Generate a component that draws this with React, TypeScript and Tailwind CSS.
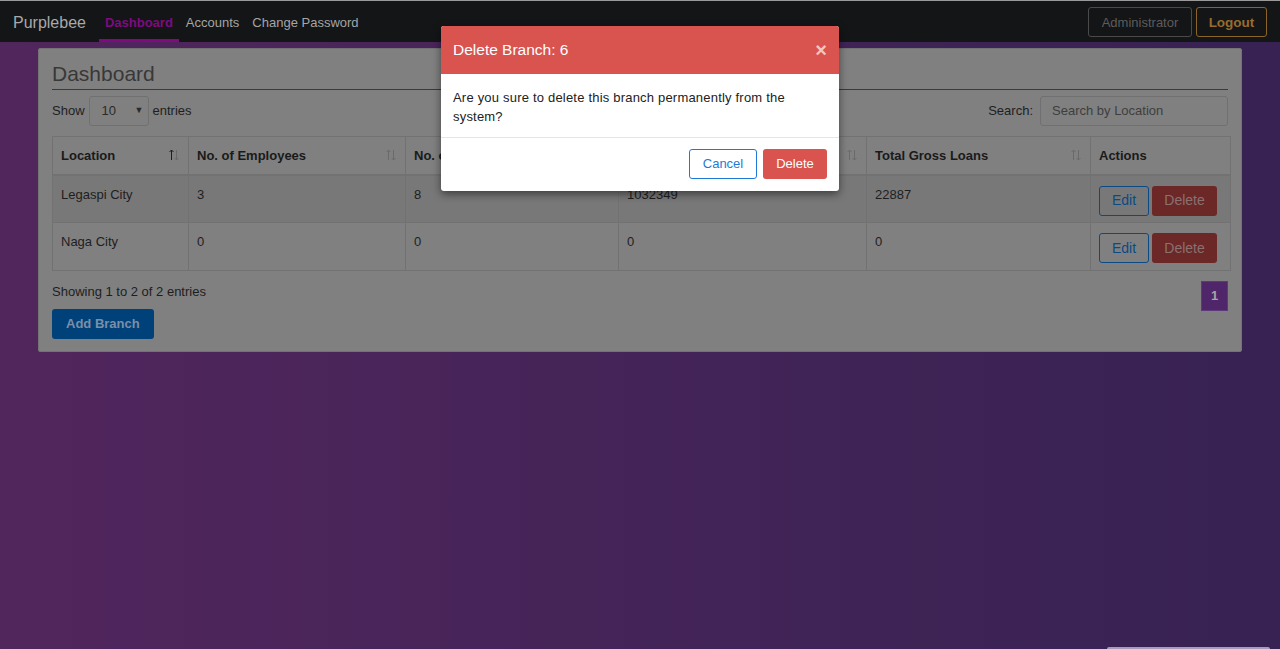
import React from "react";

const SortIcon = ({ active }: { active?: boolean }) => (
  <svg width="12" height="14" viewBox="0 0 12 14" className="shrink-0">
    <g strokeWidth="1" fill="none">
      <g stroke={active ? "#1e1e1e" : "#6a6a6a"}>
        <line x1="3.5" y1="2" x2="3.5" y2="12" />
        <polyline points="1.5,4 3.5,2 5.5,4" />
      </g>
      <g stroke="#6a6a6a">
        <line x1="8.5" y1="2" x2="8.5" y2="12" />
        <polyline points="6.5,10 8.5,12 10.5,10" />
      </g>
    </g>
  </svg>
);

const rows = [
  { loc: "Legaspi City", emp: "3", clients: "8", savings: "1032349", loans: "22887" },
  { loc: "Naga City", emp: "0", clients: "0", savings: "0", loans: "0" },
];

export default function App() {
  return (
    <div
      className="relative w-[1280px] h-[649px] overflow-hidden text-[13px] text-[#1a1a1a] bg-[linear-gradient(to_right,#51265d,#372253)]"
      style={{ fontFamily: '"Liberation Sans", Arial, sans-serif' }}
    >
      {/* Navbar */}
      <div className="h-[42px] bg-[#141517] border-t border-[#9a9a9a] flex items-stretch justify-between px-[13px]">
        <div className="flex items-stretch">
          <div className="flex items-center text-[16px] text-[#a9a9a9] mr-[13px] pt-[3px]">Purplebee</div>
          <div className="flex items-center px-[6px] font-bold text-[#800a80] border-b-[3px] border-[#800a80] pt-[5px]">Dashboard</div>
          <div className="flex items-center px-[7px] text-[#a5a5a5] pt-[3px]">Accounts</div>
          <div className="flex items-center px-[6px] text-[#a5a5a5] pt-[3px]">Change Password</div>
        </div>
        <div className="flex items-center gap-[4px] pt-[1px]">
          <div className="h-[30px] w-[104px] justify-center flex items-center border border-[#4a4a4a] rounded-[3px] text-[#5c5c5c] pt-[1px]">Administrator</div>
          <div className="h-[30px] w-[71px] justify-center flex items-center border border-[#8c6526] rounded-[3px] text-[#986c2c] font-bold text-[13.5px] pt-[2px]">Logout</div>
        </div>
      </div>

      {/* Panel */}
      <div className="mx-[38px] mt-[6px] bg-[#808080] border border-[#737373] rounded-[2px] px-[13px] pt-[12px] pb-[12px]">
        <div className="text-[21px] text-[#383838] leading-[26px] pb-[2px] border-b border-[#3a3a3a]">Dashboard</div>
        <div className="flex items-center justify-between mt-[6px] h-[30px]">
          <div className="flex items-center gap-[4px] text-[#1e1e1e]">
            <span>Show</span>
            <div className="w-[60px] h-[30px] border border-[#707070] rounded-[3px] flex items-center justify-between pl-[12px] pr-[4px] text-[#2a2a2a]">
              <span>10</span>
              <span className="text-[9px]">▼</span>
            </div>
            <span>entries</span>
          </div>
          <div className="flex items-center gap-[7px] text-[#1e1e1e]">
            <span>Search:</span>
            <div className="w-[188px] h-[30px] border border-[#707070] rounded-[3px] flex items-center px-[11px] text-[#3e3e3e]">Search by Location</div>
          </div>
        </div>

        <table className="mt-[10px] w-[1178px] table-fixed border-collapse border border-[#727272]">
          <colgroup>
            <col className="w-[136px]" />
            <col className="w-[217px]" />
            <col className="w-[213px]" />
            <col className="w-[248px]" />
            <col className="w-[224px]" />
            <col className="w-[140px]" />
          </colgroup>
          <thead>
            <tr className="h-[38px] text-[#1a1a1a] font-bold">
              {[
                ["Location", true],
                ["No. of Employees", false],
                ["No. of Clients", false],
                ["Total Savings", false],
                ["Total Gross Loans", false],
              ].map(([label, active], i) => (
                <th key={i} className="border border-[#727272] border-b-2 px-[8px] text-left font-bold">
                  <div className="flex items-center justify-between">
                    <span>{label as string}</span>
                    <SortIcon active={active as boolean} />
                  </div>
                </th>
              ))}
              <th className="border border-[#727272] border-b-2 px-[8px] text-left font-bold">Actions</th>
            </tr>
          </thead>
          <tbody>
            {rows.map((r, i) => (
              <tr key={i} className={`h-[48px] ${i === 0 ? "bg-[#787878]" : "bg-[#808080]"}`}>
                {[r.loc, r.emp, r.clients, r.savings, r.loans].map((v, j) => (
                  <td key={j} className="border border-[#727272] px-[8px] pt-[9px] align-top text-[#1e1e1e]">{v}</td>
                ))}
                <td className="border border-[#727272] px-[8px] pt-[10px] align-top">
                  <div className="flex gap-[3px]">
                    <div className="h-[30px] w-[50px] border border-[#0b4a85] rounded-[3px] flex items-center justify-center text-[#0b4a85] text-[14px]">Edit</div>
                    <div className="h-[30px] w-[65px] bg-[#6c2827] rounded-[3px] flex items-center justify-center text-[#8a7070] text-[14px]">Delete</div>
                  </div>
                </td>
              </tr>
            ))}
          </tbody>
        </table>

        <div className="flex justify-between items-start mt-[11px]">
          <div className="flex flex-col items-start">
            <div className="text-[#1e1e1e] leading-[20px]">Showing 1 to 2 of 2 entries</div>
            <div className="mt-[7px] h-[30px] px-[14px] bg-[#00417a] rounded-[3px] flex items-center text-[#7a8fa8] font-bold text-[13px]">Add Branch</div>
          </div>
          <div className="w-[27px] h-[30px] -mt-[1px] bg-[#50266a] border border-[#5e3a7a] flex items-center justify-center text-[#a5a5a5] font-bold">1</div>
        </div>
      </div>

      {/* bottom-right peeking element */}
      <div className="absolute right-[10px] bottom-0 w-[163px] h-[2px] bg-[#a89cb8] rounded-t-[2px]" />

      {/* Modal */}
      <div className="absolute left-[441px] top-[26px] w-[398px] bg-white rounded-[3px] shadow-[0_3px_9px_rgba(0,0,0,0.5)] overflow-hidden">
        <div className="h-[48px] bg-[#d9534f] flex items-center justify-between px-[12px]">
          <span className="text-white text-[15.5px]">Delete Branch: 6</span>
          <span className="text-[#f2c4c2] text-[20px] font-bold leading-none">×</span>
        </div>
        <div className="px-[12px] pt-[14px] pb-[11px] text-[#222] text-[13px] tracking-[0.2px] leading-[19px]">
          Are you sure to delete this branch permanently from the system?
        </div>
        <div className="border-t border-[#e5e5e5] flex justify-end gap-[6px] px-[12px] pt-[11px] pb-[12px]">
          <div className="h-[30px] w-[68px] border border-[#1f7ad6] rounded-[3px] flex items-center justify-center text-[#1f7ad6]">Cancel</div>
          <div className="h-[30px] w-[64px] bg-[#d9534f] rounded-[3px] flex items-center justify-center text-white">Delete</div>
        </div>
      </div>
    </div>
  );
}
